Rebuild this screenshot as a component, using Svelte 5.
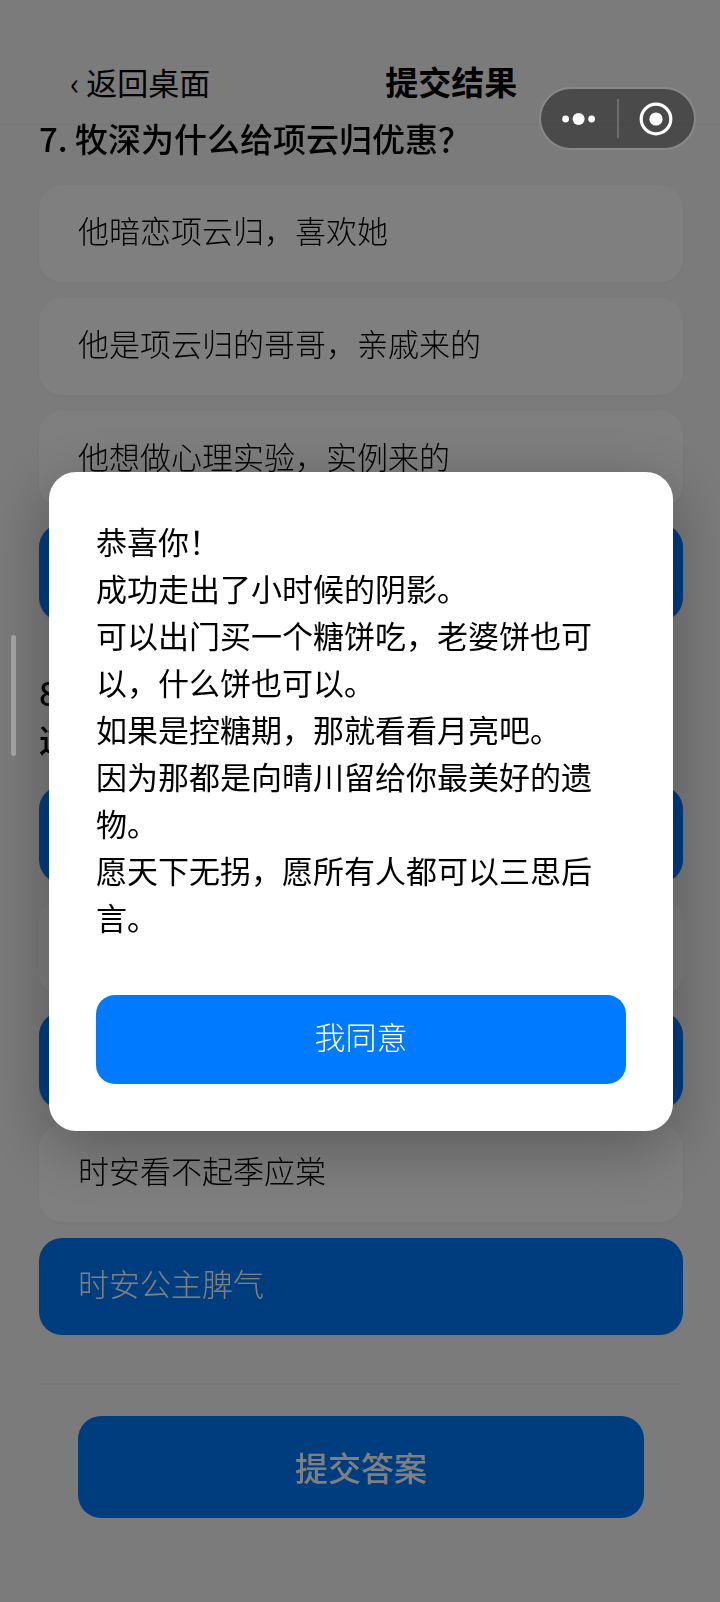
<script>
  let showResult = $state(true);
  let questions = $state([
    {
      title: ["7. 牧深为什么给项云归优惠？"],
      options: [
        { label: "他暗恋项云归，喜欢她", picked: false },
        { label: "他是项云归的哥哥，亲戚来的", picked: false },
        { label: "他想做心理实验，实例来的", picked: false },
        { label: "", picked: true },
      ],
    },
    {
      title: ["8.", "这"],
      options: [
        { label: "", picked: true },
        { label: "", picked: false },
        { label: "", picked: true },
        { label: "时安看不起季应棠", picked: false },
        { label: "时安公主脾气", picked: true },
      ],
    },
  ]);

  const resultLines = [
    "恭喜你！",
    "成功走出了小时候的阴影。",
    "可以出门买一个糖饼吃，老婆饼也可以，什么饼也可以。",
    "如果是控糖期，那就看看月亮吧。",
    "因为那都是向晴川留给你最美好的遗物。",
    "愿天下无拐，愿所有人都可以三思后言。",
  ];
</script>

<header class="nav">
  <a class="back" href="#home"><span class="chevron">‹</span> 返回桌面</a>
  <h1>提交结果</h1>
</header>

<main>
  {#each questions as question}
    <section class="question">
      <h2>
        {#each question.title as line}
          <span>{line}</span>
        {/each}
      </h2>
      <div class="options">
        {#each question.options as option}
          <button
            type="button"
            class="option"
            class:picked={option.picked}
            aria-pressed={option.picked}
            onclick={() => (option.picked = !option.picked)}
          >
            {option.label}
          </button>
        {/each}
      </div>
    </section>
  {/each}

  <footer>
    <button type="button" class="submit" onclick={() => (showResult = true)}>提交答案</button>
  </footer>
</main>

{#if showResult}
  <div class="overlay">
    <div class="dialog" role="dialog" aria-modal="true" aria-label="提交结果">
      <div class="message">
        {#each resultLines as line}
          <p>{line}</p>
        {/each}
      </div>
      <button type="button" class="agree" onclick={() => (showResult = false)}>我同意</button>
    </div>
  </div>
{/if}

<div class="edge-handle"></div>

<div class="capsule">
  <button type="button" aria-label="更多">
    <svg width="34" height="14" viewBox="0 0 34 14" fill="#fff">
      <circle cx="3.6" cy="7" r="3.4" />
      <circle cx="16.6" cy="7" r="6" />
      <circle cx="29.6" cy="7" r="3.4" />
    </svg>
  </button>
  <span class="split"></span>
  <button type="button" aria-label="关闭">
    <svg width="34" height="34" viewBox="0 0 34 34">
      <circle cx="17" cy="17" r="14.8" fill="none" stroke="#fff" stroke-width="3.2" />
      <circle cx="17" cy="17" r="6.6" fill="#fff" />
    </svg>
  </button>
</div>

<style>
  :global(body) {
    background: #f7f7f7;
    color: #000;
    font-family: "Noto Sans CJK SC", sans-serif;
  }

  button {
    border: none;
    padding: 0;
    background: none;
    color: inherit;
    font-family: inherit;
    cursor: pointer;
  }

  h1,
  h2,
  p {
    margin: 0;
  }

  .nav {
    position: fixed;
    top: 0;
    left: 0;
    right: 0;
    display: flex;
    align-items: center;
    padding: 44px 28px 6px 70px;
    height: 74px;
    background: #f7f7f7;
    border-bottom: 1px solid #efefef;
  }

  .back {
    color: #000;
    font-size: 31px;
    line-height: 47px;
    text-decoration: none;
  }

  .nav h1 {
    flex: 1;
    text-align: center;
    font-size: 33px;
    font-weight: 700;
    line-height: 47px;
  }

  main {
    position: relative;
    z-index: 1;
    padding: 115px 37px 84px 39px;
  }

  .question {
    margin-bottom: 48px;
  }

  h2 {
    margin-bottom: 23px;
    font-size: 33px;
    font-weight: 500;
    line-height: 47px;
  }

  h2 span {
    display: block;
  }

  .options {
    display: flex;
    flex-direction: column;
    gap: 16px;
  }

  .option {
    height: 97px;
    padding: 0 39px 8px;
    border-radius: 23px;
    background: #fff;
    box-shadow: 0 2px 4px rgba(0, 0, 0, 0.04);
    font-size: 31px;
    font-weight: 300;
    line-height: 47px;
    text-align: left;
  }

  .option.picked {
    background: #007aff;
    color: #fff;
  }

  footer {
    padding: 31px 39px 0;
    border-top: 2px solid #efefef;
  }

  .submit {
    width: 100%;
    height: 102px;
    border-radius: 23px;
    background: #007aff;
    color: #fff;
    font-size: 33px;
    font-weight: 500;
  }

  .overlay {
    position: fixed;
    inset: 0;
    z-index: 2;
    display: flex;
    align-items: center;
    justify-content: center;
    padding: 0 47px 0 49px;
    background: rgba(0, 0, 0, 0.5);
  }

  .dialog {
    flex: 1;
    padding: 45px 47px 47px;
    border-radius: 27px;
    background: #fff;
    box-shadow: 0 16px 64px rgba(0, 0, 0, 0.3);
  }

  .message {
    margin-bottom: 55px;
    font-size: 31px;
    line-height: 47px;
  }

  .agree {
    display: block;
    width: 100%;
    height: 89px;
    padding-bottom: 8px;
    border-radius: 19px;
    background: #007aff;
    color: #fff;
    font-size: 31px;
    font-weight: 300;
  }

  .edge-handle {
    position: fixed;
    left: 11px;
    top: 635px;
    z-index: 3;
    width: 5px;
    height: 121px;
    border-radius: 3px;
    background: #a0a0a0;
  }

  .capsule {
    position: fixed;
    top: 87px;
    right: 24px;
    z-index: 3;
    display: flex;
    align-items: center;
    box-sizing: border-box;
    width: 157px;
    height: 63px;
    border: 2px solid rgba(255, 255, 255, 0.1);
    border-radius: 32px;
    background: rgba(0, 0, 0, 0.4);
    background-clip: padding-box;
  }

  .capsule button {
    flex: 1;
    display: flex;
    align-items: center;
    justify-content: center;
    height: 100%;
  }

  .split {
    width: 2px;
    height: 39px;
    background: #6c6c6c;
  }
</style>
